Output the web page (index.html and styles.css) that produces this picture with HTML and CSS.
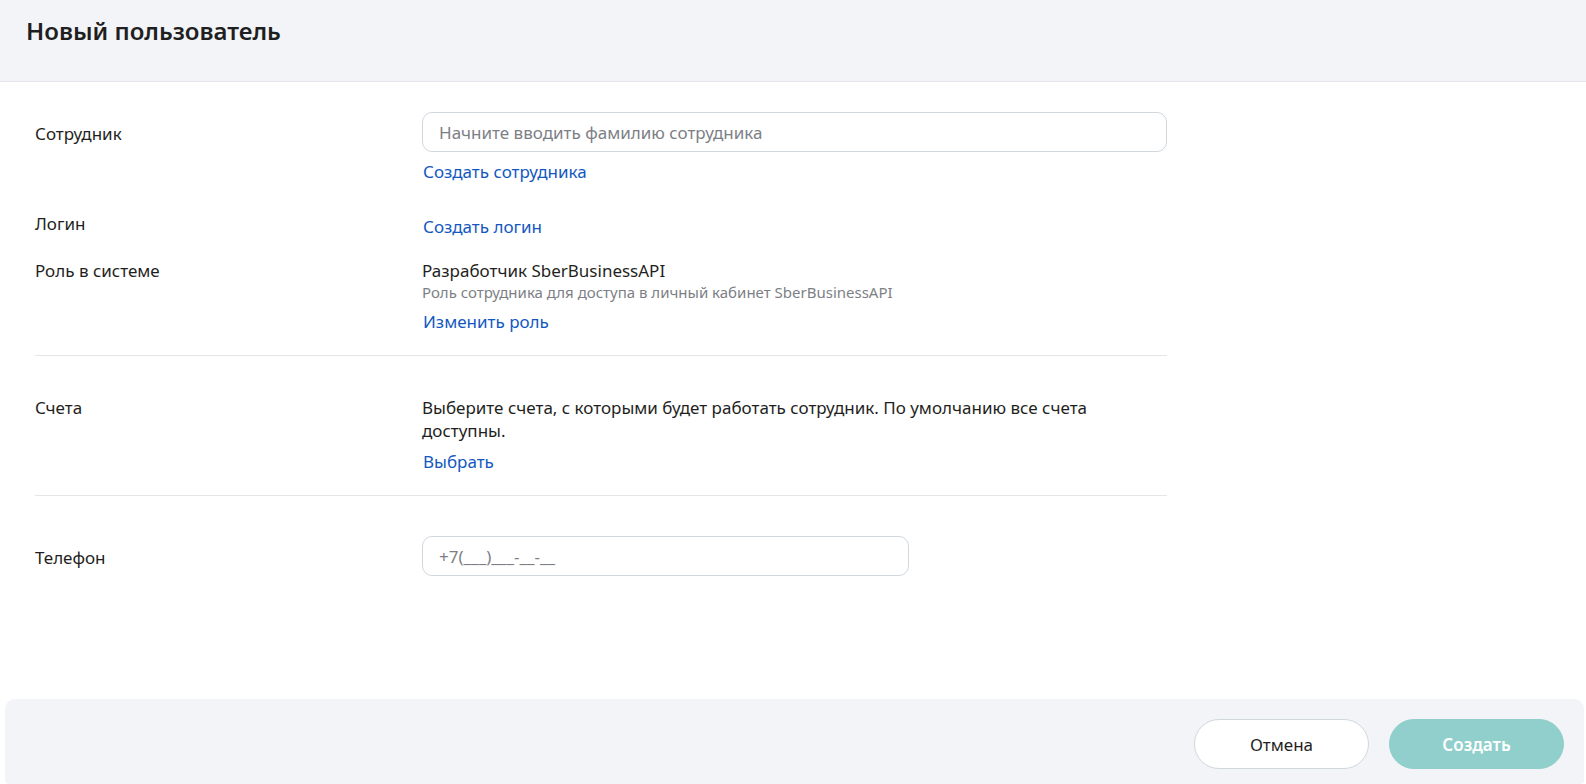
FILE: index.html
```html
<!DOCTYPE html>
<html lang="ru">
<head>
<meta charset="utf-8">
<meta name="viewport" content="width=device-width, initial-scale=1">
<title>Новый пользователь</title>
<link rel="stylesheet" href="styles.css">
</head>
<body>
<header class="page-header">
  <h1 class="page-title">Новый пользователь</h1>
</header>
<form class="user-form">
  <main class="fields">
    <div class="row">
      <label class="row-label row-label-input" for="employee">Сотрудник</label>
      <div class="row-body">
        <input class="text-input" id="employee" type="text" placeholder="Начните вводить фамилию сотрудника">
        <a class="link" href="#employee">Создать сотрудника</a>
      </div>
    </div>
    <div class="row row-login">
      <span class="row-label">Логин</span>
      <div class="row-body row-body-login">
        <a class="link" href="#login">Создать логин</a>
      </div>
    </div>
    <div class="row row-role">
      <span class="row-label">Роль в системе</span>
      <div class="row-body">
        <p class="value">Разработчик SberBusinessAPI</p>
        <p class="hint">Роль сотрудника для доступа в личный кабинет SberBusinessAPI</p>
        <a class="link" href="#role">Изменить роль</a>
      </div>
    </div>
    <hr class="divider">
    <div class="row">
      <span class="row-label">Счета</span>
      <div class="row-body">
        <p class="value">Выберите счета, с которыми будет работать сотрудник. По умолчанию все счета доступны.</p>
        <a class="link" href="#accounts">Выбрать</a>
      </div>
    </div>
    <hr class="divider">
    <div class="row">
      <label class="row-label row-label-input" for="phone">Телефон</label>
      <div class="row-body">
        <input class="text-input text-input-phone" id="phone" type="tel" placeholder="+7(___)___-__-__">
      </div>
    </div>
  </main>
  <footer class="actions">
    <button class="button" type="button">Отмена</button>
    <button class="button button-primary" type="submit">Создать</button>
  </footer>
</form>
</body>
</html>
```
FILE: styles.css
```css
* {
  box-sizing: border-box;
}

body {
  display: flex;
  flex-direction: column;
  min-height: 100vh;
  margin: 0;
  background: #fff;
  color: #1f1f22;
  font: 17px/23px "Noto Sans", sans-serif;
}

.page-header {
  padding: 13px 26px 32px;
  border-bottom: 1px solid #e4e5ec;
  background: #f2f4f8;
}

.page-title {
  margin: 0;
  font-size: 24px;
  font-weight: 600;
  line-height: 36px;
}

.user-form {
  display: flex;
  flex: 1;
  flex-direction: column;
}

.fields {
  flex: 1;
  width: 100%;
  max-width: 1202px;
  padding: 30px 35px;
}

.row {
  display: grid;
  grid-template-columns: 387px minmax(0, 1fr);
}

.row-label-input {
  padding-top: 10px;
}

.row-body {
  display: flex;
  flex-direction: column;
  align-items: flex-start;
}

.row-login {
  margin-top: 29px;
}

.row-body-login .link {
  margin-top: 3px;
}

.row-role {
  margin-top: 21px;
}

.text-input {
  width: 100%;
  height: 40px;
  padding: 0 16px;
  border: 1px solid #d0d7dd;
  border-radius: 10px;
  background: #fff;
  color: inherit;
  font: inherit;
}

.text-input::placeholder {
  color: #7d7f86;
  opacity: 1;
}

.text-input-phone {
  max-width: 487px;
}

.value,
.hint {
  margin: 0;
}

.hint {
  color: #7d7f86;
  font-size: 15px;
  line-height: 20px;
}

.link {
  margin-top: 8px;
  padding-left: 1px;
  color: #1358bf;
  text-decoration: none;
}

.divider {
  margin: 22px 0 40px;
  border: 0;
  border-top: 1px solid #e4e5e6;
}

.actions {
  display: flex;
  justify-content: flex-end;
  gap: 20px;
  margin: 0 2px 0 5px;
  padding: 20px 20px 15px;
  border-radius: 10px 10px 4px 4px;
  background: #f2f4f8;
}

.button {
  width: 175px;
  height: 50px;
  border: 1px solid #d0d7dd;
  border-radius: 25px;
  background: #fff;
  color: inherit;
  font: inherit;
}

.button-primary {
  border-color: #90cfcc;
  background: #90cfcc;
  color: #fff;
  font-weight: 600;
}
```
